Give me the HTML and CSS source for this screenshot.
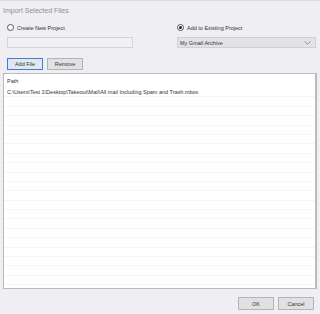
FILE: index.html
```html
<!DOCTYPE html>
<html lang="en">
<head>
    <meta charset="UTF-8">
    <title>Import Selected Files</title>
    <link rel="stylesheet" href="styles.css">
</head>
<body>
    <div class="dialog">
        <div class="title">Import Selected Files</div>

        <div class="options">
            <div class="option">
                <label class="radio-row"><span class="radio"></span>Create New Project</label>
                <div class="textbox"></div>
            </div>
            <div class="option">
                <label class="radio-row"><span class="radio checked"></span>Add to Existing Project</label>
                <div class="select">
                    <span>My Gmail Archive</span>
                    <svg width="7" height="4" viewBox="0 0 7 4"><path d="M0.5 0.5 L3.5 3.2 L6.5 0.5" fill="none" stroke="#8a8a8a" stroke-width="0.9"/></svg>
                </div>
            </div>
        </div>

        <div class="toolbar">
            <button class="btn focused">Add File</button>
            <button class="btn">Remove</button>
        </div>

        <div class="list">
            <div class="list-head">Path</div>
            <div class="row first">C:\Users\Test 1\Desktop\Takeout\Mail\All mail Including Spam and Trash.mbox</div>
            <div class="row"></div><div class="row"></div><div class="row"></div><div class="row"></div>
            <div class="row"></div><div class="row"></div><div class="row"></div><div class="row"></div>
            <div class="row"></div><div class="row"></div><div class="row"></div><div class="row"></div>
            <div class="row"></div><div class="row"></div><div class="row"></div><div class="row"></div>
            <div class="row"></div><div class="row"></div><div class="row"></div><div class="row"></div>
            <div class="row"></div>
        </div>

        <div class="footer">
            <button class="btn">OK</button>
            <button class="btn">Cancel</button>
        </div>
    </div>
</body>
</html>
```

FILE: styles.css
```css
body {
    margin: 0;
    padding: 0;
    background-color: #eeeef3;
    font-family: "Liberation Sans", Arial, sans-serif;
    color: #333;
}
.dialog {
    width: 320px;
    height: 314px;
    box-sizing: border-box;
    border-top: 1px solid #dcdce3;
    display: flex;
    flex-direction: column;
}
.title {
    font-size: 7px;
    color: #8e919a;
    padding: 6px 0 0 3px;
    height: 12px;
}
.options {
    display: grid;
    grid-template-columns: 126px 139px;
    column-gap: 44px;
    padding: 5px 0 0 7px;
}
.radio-row {
    display: flex;
    align-items: center;
    gap: 3px;
    font-size: 5.5px;
    color: #333;
    height: 7px;
}
.radio {
    width: 5px;
    height: 5px;
    border: 1px solid #555;
    border-radius: 50%;
    background: #fff;
    display: inline-flex;
    align-items: center;
    justify-content: center;
}
.radio.checked::after {
    content: "";
    width: 3px;
    height: 3px;
    border-radius: 50%;
    background: #222;
}
.textbox {
    margin-top: 6px;
    height: 9px;
    border: 1px solid #d4d4d8;
    background: #f1f1f3;
}
.select {
    margin-top: 6px;
    height: 9px;
    border: 1px solid #cfcfd4;
    background: #e3e3e6;
    display: flex;
    align-items: center;
    justify-content: space-between;
    padding: 0 4px 0 2px;
    font-size: 5.5px;
    color: #333;
}
.toolbar {
    display: flex;
    gap: 4px;
    padding: 10px 0 0 7px;
}
.btn {
    width: 36px;
    height: 12px;
    padding: 0;
    font-family: "Liberation Sans", Arial, sans-serif;
    font-size: 5.5px;
    color: #333;
    background: #e1e1e3;
    border: 1px solid #b4b4b8;
    border-radius: 0;
}
.btn.focused {
    border-color: #3d7fd3;
    background: #e3e6ec;
}
.list {
    margin: 3px 3px 0 3px;
    height: 216px;
    box-sizing: border-box;
    border: 1px solid #b9b9c0;
    border-right-width: 2px;
    background: #fff;
    overflow: hidden;
}
.list-head {
    font-size: 5.5px;
    height: 11px;
    line-height: 11px;
    padding: 2px 0 0 3px;
}
.row {
    height: 8.4px;
    line-height: 8.4px;
    font-size: 5.5px;
    padding-left: 3px;
    border-bottom: 1px solid #f5f5f8;
    white-space: nowrap;
}
.row.first {
    height: 9.4px;
    line-height: 10px;
}
.footer {
    display: flex;
    justify-content: flex-end;
    gap: 4px;
    padding: 8px 6px 0 0;
}
.footer .btn {
    height: 13px;
}
```
